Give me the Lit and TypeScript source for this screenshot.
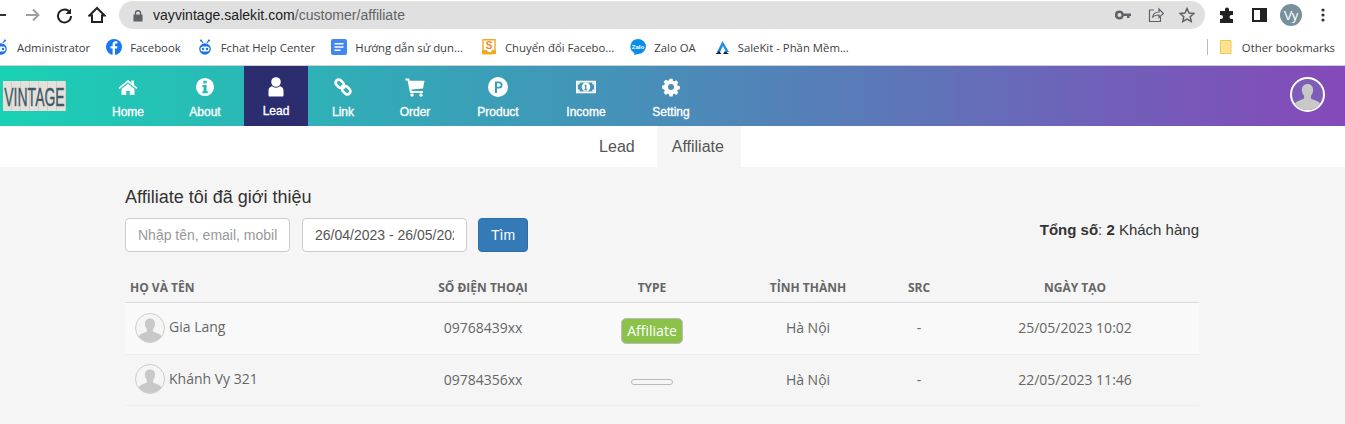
import { LitElement, html, css, svg } from "lit";
import { customElement } from "lit/decorators.js";

const robot = () => html`<svg class="bi" viewBox="0 0 16 16"><path d="M4 1l2 3M12 1l-2 3" stroke="#1a73e8" stroke-width="1.200" fill="none"/><circle cx="4" cy="1.500" r="1" fill="#1a73e8"/><circle cx="12" cy="1.500" r="1" fill="#1a73e8"/><circle cx="8" cy="10" r="5.800" fill="#1a73e8"/><rect x="3.500" y="7.500" width="9" height="5" rx="2.500" fill="#fff"/><circle cx="6" cy="10" r="1.200" fill="#1a73e8"/><circle cx="10" cy="10" r="1.200" fill="#1a73e8"/></svg>`;
const fb = html`<svg class="bi" viewBox="0 0 16 16"><circle cx="8" cy="8" r="8" fill="#1877f2"/><path d="M9 16V9.600h2l.4-2.400H9V5.800c0-.8.3-1.200 1.200-1.200h1.200V2.400C11 2.300 10.400 2.200 9.700 2.200 7.800 2.200 6.600 3.400 6.600 5.400v1.800H4.500v2.400h2.100V16z" fill="#fff"/></svg>`;
const doc = html`<svg class="bi" viewBox="0 0 16 16"><rect width="16" height="16" rx="2" fill="#4285f4"/><path d="M3.500 4h9v1.600h-9zM3.500 7.200h9v1.600h-9zM3.500 10.400h6v1.600h-6z" fill="#fff"/></svg>`;
const conv = html`<svg class="bi" viewBox="0 0 16 16"><path d="M2 .7h12v10l-3 4H2z" fill="#fff" stroke="#f5a623" stroke-width="1.400"/><path d="M1 11h5l1 2h3l1-2h4v4H1z" fill="#f5a623"/><text x="8" y="9.500" font-size="10" font-weight="700" text-anchor="middle" fill="#e8891c" font-family="Liberation Sans">S</text></svg>`;
const zalo = html`<svg class="bi" viewBox="0 0 16 16"><path d="M8 0a8 7.500 0 0 1 0 15l-4 1 .5-2A8 7.500 0 0 1 8 0z" fill="#0a8fe8"/><text x="8" y="10" font-size="6.200" font-weight="700" text-anchor="middle" fill="#fff" font-family="Liberation Sans">Zalo</text></svg>`;
const sk = html`<svg class="bi" viewBox="0 0 16 16"><path d="M8.500 2L3 13h3l3-6 3 6h3z" fill="#1a8fe3"/><path d="M1.500 15l3.500-3 2.500 3zM15 15l-4-3-2 3z" fill="#12224d"/></svg>`;

const ic = {
  home: svg`<path d="M10 3L.5 10.800l1.100 1.300L10 5.200l8.400 6.900 1.100-1.300-3.500-2.900V3.500h-2.600v2.300zM3.500 12v6h4.800v-4h3.400v4h4.800v-6L10 6.700z"/>`,
  about: svg`<path fill-rule="evenodd" d="M10 .5a9.500 9.500 0 1 0 0 19 9.500 9.500 0 0 0 0-19zM8.300 3.500h3.400v2.800H8.300zM7.300 8h4.400v6.500h1.300v2H7.300v-2h1.200V10H7.300z"/>`,
  lead: svg`<circle cx="10" cy="5" r="4.800"/><path d="M2.500 18.500v-5C2.500 11 4.500 9.500 6 9.300c1 .9 2.500 1.400 4 1.400s3-.5 4-1.400c1.500.2 3.500 1.700 3.500 4.200v5a1 1 0 0 1-1 1h-13a1 1 0 0 1-1-1z"/>`,
  link: svg`<g fill="none" stroke="#fff" stroke-width="3.400" transform="rotate(45 10 10)"><rect x="-2" y="6" width="12" height="8" rx="4"/><rect x="10" y="6" width="12" height="8" rx="4"/><path d="M7 10h6"/></g>`,
  cart: svg`<path d="M.5 1.500h3.700l.6 2.300H19.500L18 11.500 6.500 12.600l.3 1.400H18v2H5L2.600 3.500H.5z"/><circle cx="7" cy="18" r="1.700"/><circle cx="16" cy="18" r="1.700"/>`,
  cog: svg`<path fill-rule="evenodd" d="M8.300 1h3.400l.5 2.300 1.500.6 2-1.300 2.400 2.400-1.300 2 .6 1.500 2.300.5v3.400l-2.300.5-.6 1.500 1.300 2-2.400 2.400-2-1.300-1.500.6-.5 2.300H8.300l-.5-2.300-1.500-.6-2 1.300-2.400-2.400 1.300-2-.6-1.500L.3 11.700V8.300l2.300-.5.6-1.500-1.300-2 2.400-2.400 2 1.300 1.500-.6zM10 6.700a3.300 3.300 0 1 0 0 6.600 3.300 3.300 0 0 0 0-6.600z"/>`,
};

const person = svg`<path d="M50 16c-12 0-19 9-18 21 .5 7 3 13 7 17v8c-3 4-18 7-25 12-4 3-6 8-6 14a48 48 0 0 0 84 0c0-6-2-11-6-14-7-5-22-8-25-12v-8c4-4 6.500-10 7-17 1-12-6-21-18-21z" fill="#c8c8c8"/>`;

@customElement("app-root")
export class AppRoot extends LitElement {
  static styles = css`
    :host { display: block; width: 1345px; height: 424px; overflow: hidden; background: #f5f5f5; font-family: "Liberation Sans", Arial, sans-serif; }
    * { box-sizing: border-box; }
    .toolbar { height: 29px; background: #fff; display: flex; align-items: center; padding-top: 1px; }
    .tb { flex: none; display: block; }
    .back { margin-left: -9px; width: 17px; height: 16px; }
    .fwd { margin-left: 16px; width: 17px; height: 16px; }
    .rel { margin-left: 15px; width: 17px; height: 17px; }
    .hm { margin-left: 15px; width: 18px; height: 18px; }
    .omni { margin-left: 13px; width: 1086px; height: 28px; border-radius: 14px; background: #e0e0e0; display: flex; align-items: center; padding: 0 10px 0 14px; font-size: 14px; letter-spacing: .04px; color: #5f6368; flex: none; }
    .omni b { font-weight: 400; color: #202124; }
    .lock { width: 10px; height: 13px; margin-right: 10px; }
    .omni .sp { flex: 1; }
    .omni svg.oi { width: 16px; height: 16px; }
    .oi.s { margin-left: 17px; }
    .oi.t { margin-left: 15px; }
    .puzzle { margin-left: 14px; width: 17px; height: 17px; }
    .panel { margin-left: 16px; width: 15px; height: 14px; }
    .avatar { margin-left: 13px; width: 22px; height: 22px; border-radius: 50%; background: #78909c; color: #fff; font-size: 13px; display: flex; align-items: center; justify-content: center; flex: none; }
    .dots { margin-left: 19px; width: 4px; height: 14px; }
    .bookmarks { height: 37px; background: #fff; border-bottom: 1px solid #d0d0d0; display: flex; align-items: center; font: 11.350px "Open Sans", "Noto Sans", sans-serif; color: #3c4043; }
    .bm { display: flex; align-items: center; gap: 8px; flex: none; margin-left: 16px; }
    .bm.first { margin-left: -7px; }
    .bm.wide { margin-left: 18px; }
    .bi { width: 16px; height: 16px; flex: none; }
    .bsep { width: 1px; height: 16px; background: #bbb; margin-left: auto; }
    .bm.other { margin-left: 12px; margin-right: 10px; gap: 10px; }
    .fold { width: 12px; height: 14px; flex: none; }
    .nav { height: 60px; display: flex; background: linear-gradient(90deg, #1ad1b4 0%, #3c9cb8 38%, #5d76b8 67%, #7060b9 82%, #8549b9 100%); color: #fff; }
    .logo { width: 63px; height: 30px; margin: 15px 0 0 3px; flex: none; background: repeating-linear-gradient(90deg, #e4e1dc 0 8px, #d2cfc9 8px 9px); color: #3f5a66; font: 400 14px/30px "Liberation Sans", sans-serif; white-space: nowrap; text-align: center; }
    .logo span { display: inline-block; transform: scaleY(1.900); -webkit-text-stroke: .2px #3f5a66; }
    .items { display: flex; margin-left: 24px; }
    .item { display: flex; flex-direction: column; align-items: center; font-size: 12px; -webkit-text-stroke: .35px #fff; padding-top: 11px; flex: none; }
    .item svg { width: 20px; height: 20px; fill: #fff; margin-bottom: 8px; display: block; }
    .item.on { background: #2b2d6e; }
    .item.on svg { margin-bottom: 7px; }
    .me { margin-left: auto; margin-right: 20px; margin-top: 11px; width: 35px; height: 35px; border-radius: 50%; border: 2px solid #fff; overflow: hidden; background: #7e5db9; flex: none; }
    .me svg { width: 31px; height: 31px; display: block; }
    .tabs { height: 41px; background: #fff; display: flex; justify-content: center; gap: 6px; font-size: 16px; color: #555; padding-right: 21px; }
    .tab { height: 41px; line-height: 42px; padding: 0 16px; }
    .tab.on { background: #f5f5f5; padding: 0 17px 0 15px; }
    .main { padding: 20px 146px 0 125px; color: #333; }
    h4 { margin: 0; font-size: 18px; font-weight: 400; line-height: 20px; color: #333; }
    .filter { margin-top: 11px; display: flex; align-items: center; }
    .field { height: 34px; width: 165px; flex: none; border: 1px solid #ccc; border-radius: 4px; background: #fff; font: 14px "Liberation Sans", sans-serif; padding: 0 12px; color: #555; outline: none; }
    .field::placeholder { color: #999; opacity: 1; }
    .date { margin-left: 12px; }
    .btn { margin-left: 11px; width: 50px; height: 34px; border: 1px solid #2e6da4; border-radius: 4px; background: #337ab7; color: #fff; font-size: 14px; line-height: 32px; text-align: center; flex: none; }
    .total { margin-left: auto; font-size: 15px; color: #333; margin-bottom: 11px; }
    .table { margin-top: 20px; font-family: "Open Sans", sans-serif; font-size: 14px; color: #666; }
    .row { display: grid; grid-template-columns: 266px 184px 154px 158px 64px 248px; align-items: center; text-align: center; }
    .head { height: 31px; border-bottom: 1px solid #ddd; font-weight: 700; font-size: 12px; color: #666; }
    .r { height: 51px; border-bottom: 1px solid #eee; padding-bottom: 2px; }
    .r.a { height: 52px; background: #f9f9f9; }
    .name { text-align: left; padding-left: 5px; }
    .who { display: flex; align-items: center; text-align: left; padding-left: 10px; gap: 4px; }
    .who span { margin-bottom: 1px; }
    .a .who span { margin-bottom: 3px; }
    .ava { width: 30px; height: 30px; border-radius: 50%; border: 1px solid #ccc; overflow: hidden; flex: none; background: #f5f5f5; }
    .ava svg { width: 28px; height: 28px; display: block; }
    .badge { justify-self: center; background: #8bc34a; border: 1px solid #bbb; border-radius: 5px; color: #fff; font-size: 14px; line-height: 24px; height: 26px; padding: 0 5px; margin-top: 6px; }
    .badge.empty { background: #f5f5f5; height: 6px; width: 42px; padding: 0; margin-top: 6px; }
  `;

  render() {
    const items: [string, number, any][] = [
      ["Home", 76, html`<svg viewBox="0 0 20 20">${ic.home}</svg>`],
      ["About", 78, html`<svg viewBox="-.5 -.5 21 21">${ic.about}</svg>`],
      ["Lead", 64, html`<svg viewBox="0 0 20 20">${ic.lead}</svg>`],
      ["Link", 70, html`<svg viewBox="-3 -3 26 26">${ic.link}</svg>`],
      ["Order", 74, html`<svg viewBox="0 0 20 20">${ic.cart}</svg>`],
      ["Product", 92, html`<svg viewBox="0 0 20 20"><path fill-rule="evenodd" d="M10 0a10 10 0 1 0 0 20 10 10 0 0 0 0-20zM7 4.500h4a3.500 3.500 0 0 1 0 7H9V16H7zM9 6.300v3.400h2a1.700 1.700 0 0 0 0-3.400z"/></svg>`],
      ["Income", 84, html`<svg viewBox="0 0 22 20"><path fill-rule="evenodd" d="M0 3h22v14H0zM2 5v10h18V5z"/><path fill-rule="evenodd" d="M11 5a4.700 5 0 1 0 0 10 4.700 5 0 0 0 0-10zM10 7.500h1.500V12.500h1V13.500H9v-1h1V9H9z"/><path d="M2 5h2.500A2.500 2.500 0 0 1 2 7.500zM20 5h-2.500A2.500 2.500 0 0 0 20 7.500zM2 15h2.500A2.500 2.500 0 0 0 2 12.500zM20 15h-2.500a2.500 2.500 0 0 1 2.500-2.500z"/></svg>`],
      ["Setting", 86, html`<svg viewBox="-1 -1 22 22">${ic.cog}</svg>`],
    ];
    return html`
      <div class="toolbar">
        <svg class="tb back" viewBox="0 0 17 16"><path d="M15 8H3M8 2.500L2.500 8 8 13.500" fill="none" stroke="#333" stroke-width="2"/></svg>
        <svg class="tb fwd" viewBox="0 0 17 16"><path d="M2 8h12M9 2.500L14.500 8 9 13.500" fill="none" stroke="#a0a0a0" stroke-width="2"/></svg>
        <svg class="tb rel" viewBox="0 0 17 17"><path d="M14 5.500A6.500 6.500 0 1 0 15 9" fill="none" stroke="#222" stroke-width="2"/><path d="M15 1.500v5.500H9.500z" fill="#222"/></svg>
        <svg class="tb hm" viewBox="0 0 18 18"><path d="M9 2L1.500 9.500H4V16h10V9.500h2.500z" fill="none" stroke="#222" stroke-width="2"/></svg>
        <div class="omni">
          <svg class="lock" viewBox="0 0 11 13"><path d="M2 5.500V4a3.500 3.500 0 0 1 7 0v1.500h1.500V13H.5V5.500zM3.500 5.500h4V4a2 2 0 0 0-4 0z" fill="#5f6368" fill-rule="evenodd"/></svg>
          <span><b>vayvintage.salekit.com</b>/customer/affiliate</span>
          <span class="sp"></span>
          <svg class="oi" viewBox="0 0 16 16"><path fill-rule="evenodd" d="M4.500 3.500a4.500 4.500 0 0 1 4.200 3H16v2.500h-1.500V11h-2.500V9H8.700a4.500 4.500 0 1 1-4.200-5.500zm0 2.500a2 2 0 1 0 0 4 2 2 0 0 0 0-4z" fill="#5f6368"/></svg>
          <svg class="oi s" viewBox="0 0 16 16"><path d="M6 3H1.500v11.500h11V10M4.500 10.500c.5-3.500 3-5.500 6.500-5.500V2l4.500 4.500L11 10.500V8c-2.500 0-5 .5-6.500 2.500z" fill="none" stroke="#5f6368" stroke-width="1.200"/></svg>
          <svg class="oi t" viewBox="0 0 16 16"><path d="M8 1.500l2 4.500 4.800.5-3.600 3.200 1 4.800L8 12.100l-4.200 2.400 1-4.800L1.200 6.500 6 6z" fill="none" stroke="#5f6368" stroke-width="1.500"/></svg>
        </div>
        <svg class="tb puzzle" viewBox="0 0 17 17"><path d="M6 2.500a2 2 0 0 1 4 0V4h4v4h-1.500a2 2 0 0 0 0 4H14v4H1v-4h1a2 2 0 0 0 0-4H1V4h5z" fill="#222"/></svg>
        <svg class="tb panel" viewBox="0 0 15 14"><path fill-rule="evenodd" d="M0 0h15v14H0zM2 2v10h6V2z" fill="#222"/></svg>
        <div class="avatar">Vy</div>
        <svg class="tb dots" viewBox="0 0 4 14"><circle cx="2" cy="2" r="1.600" fill="#333"/><circle cx="2" cy="7" r="1.600" fill="#333"/><circle cx="2" cy="12" r="1.600" fill="#333"/></svg>
      </div>
      <div class="bookmarks">
        <div class="bm first">${robot()}<span>Administrator</span></div>
        <div class="bm">${fb}<span>Facebook</span></div>
        <div class="bm">${robot()}<span>Fchat Help Center</span></div>
        <div class="bm">${doc}<span>Hướng dẫn sử dụn...</span></div>
        <div class="bm wide">${conv}<span>Chuyển đổi Facebo...</span></div>
        <div class="bm">${zalo}<span>Zalo OA</span></div>
        <div class="bm wide">${sk}<span>SaleKit - Phần Mềm...</span></div>
        <div class="bsep"></div>
        <div class="bm other"><svg class="fold" viewBox="0 0 12 14"><path d="M.5.500h10.500v13H.5z" fill="#fde293" stroke="#f0c850"/></svg><span>Other bookmarks</span></div>
      </div>
      <div class="nav">
        <div class="logo"><span>VINTAGE</span></div>
        <div class="items">${items.map(([t, w, i]) => html`<div class="item ${t === "Lead" ? "on" : ""}" style="width:${w}px">${i}<span>${t}</span></div>`)}</div>
        <div class="me"><svg viewBox="0 0 100 100">${person}</svg></div>
      </div>
      <div class="tabs"><div class="tab">Lead</div><div class="tab on">Affiliate</div></div>
      <div class="main">
        <h4>Affiliate tôi đã giới thiệu</h4>
        <div class="filter">
          <input class="field" placeholder="Nhập tên, email, mobile" />
          <input class="field date" value="26/04/2023 - 26/05/2023" />
          <div class="btn">Tìm</div>
          <div class="total"><b>Tổng số</b>: <b>2</b> Khách hàng</div>
        </div>
        <div class="table">
          <div class="row head"><div class="name">HỌ VÀ TÊN</div><div>SỐ ĐIỆN THOẠI</div><div>TYPE</div><div>TỈNH THÀNH</div><div>SRC</div><div>NGÀY TẠO</div></div>
          <div class="row r a">
            <div class="who"><div class="ava"><svg viewBox="0 0 100 100">${person}</svg></div><span>Gia Lang</span></div>
            <div>09768439xx</div><div class="badge">Affiliate</div><div>Hà Nội</div><div>-</div><div>25/05/2023 10:02</div>
          </div>
          <div class="row r">
            <div class="who"><div class="ava"><svg viewBox="0 0 100 100">${person}</svg></div><span>Khánh Vy 321</span></div>
            <div>09784356xx</div><div class="badge empty"></div><div>Hà Nội</div><div>-</div><div>22/05/2023 11:46</div>
          </div>
        </div>
      </div>
    `;
  }
}
